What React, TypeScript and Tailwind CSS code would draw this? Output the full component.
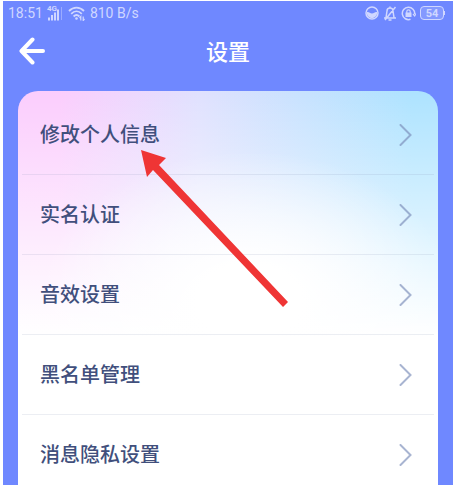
import { Fragment } from "react";

const items = ["修改个人信息", "实名认证", "音效设置", "黑名单管理", "消息隐私设置"];

function SignalIcon() {
  return (
    <svg width="17" height="18" viewBox="0 0 17 18" fill="none" aria-hidden="true">
      <text x="0" y="7" fontSize="8" fontWeight="700" fill="currentColor">
        4G
      </text>
      <path
        d="M2 13.500v3M5 11v5.500M8 8.500v8M11 5.500v11"
        stroke="currentColor"
        strokeWidth="2"
      />
      <path d="M14.500 3v13" stroke="currentColor" strokeWidth="1" opacity="0.45" />
    </svg>
  );
}

function WifiIcon() {
  return (
    <svg width="18" height="16" viewBox="0 0 18 16" fill="none" stroke="currentColor" aria-hidden="true">
      <path d="M1 6c4.400-4.500 10.600-4.500 15 0" strokeWidth="1.800" />
      <path d="M3.200 8.800c3.200-3.200 7.400-3.200 10.600 0" strokeWidth="1.800" />
      <path d="M5.600 11.500c1.900-1.900 3.900-1.900 5.800 0" strokeWidth="1.800" />
      <circle cx="8.500" cy="13.500" r="1.300" fill="currentColor" stroke="none" />
      <path d="M12.800 15.500v-4l-1.300 1.500M15.200 11.500v4l1.300-1.500" strokeWidth="1.200" />
    </svg>
  );
}

function EyeProtectionIcon() {
  return (
    <svg width="14" height="14" viewBox="0 0 14 14" fill="none" aria-hidden="true">
      <circle cx="7" cy="7" r="6" stroke="currentColor" strokeWidth="1.500" />
      <path d="M2 6c2-.5 3 1.500 5 1.500S10 5.500 12 6c.5 3.500-2 6-5 6S1.500 9.500 2 6z" fill="currentColor" />
    </svg>
  );
}

function MutedBellIcon() {
  return (
    <svg width="14" height="15" viewBox="0 0 14 15" fill="none" stroke="currentColor" strokeWidth="1.500" aria-hidden="true">
      <path d="M3 11.500 4 5a3 3 0 0 1 6 0l1 6.500M1 12h12M5.500 14h3M7 2V.5M12.500 1 2 14" />
    </svg>
  );
}

function RotationLockIcon() {
  return (
    <svg width="15" height="15" viewBox="0 0 15 15" fill="none" stroke="currentColor" aria-hidden="true">
      <path d="M9.500 13.300A6.200 6.200 0 1 1 13.700 8" strokeWidth="1.500" />
      <path d="m12 8 1.700 2L15 7.500" strokeWidth="1.200" />
      <rect x="4.500" y="6.500" width="6" height="4.500" fill="currentColor" stroke="none" />
      <path d="M5.800 7V5.500a1.700 1.700 0 0 1 3.400 0V7" strokeWidth="1.200" />
    </svg>
  );
}

function Battery({ level }: { level: number }) {
  return (
    <div className="flex items-center">
      <div className="flex h-3.5 w-6 items-center justify-center rounded-sm border border-current bg-white/15 text-[11px] leading-none font-bold">
        {level}
      </div>
      <div className="h-1 w-px bg-current" />
    </div>
  );
}

function StatusBar() {
  return (
    <div className="flex h-6 items-center justify-between pr-2 pl-[5px] text-sm text-[#d0d7ff]">
      <div className="flex items-center gap-1">
        <span>18:51</span>
        <SignalIcon />
        <WifiIcon />
        <span>810 B/s</span>
      </div>
      <div className="flex items-center gap-1">
        <EyeProtectionIcon />
        <MutedBellIcon />
        <RotationLockIcon />
        <Battery level={54} />
      </div>
    </div>
  );
}

function Header() {
  return (
    <header className="grid h-[66px] grid-cols-[1fr_auto_1fr] items-start pt-[10px] text-white">
      <button type="button" aria-label="返回" className="ml-4 flex h-8 w-7 items-center">
        <svg width="26" height="28" viewBox="0 0 26 28" fill="none" aria-hidden="true">
          <path
            d="M13.500 2.500 2.500 14l11 11.500M3 14h21"
            stroke="currentColor"
            strokeWidth="4"
            strokeLinecap="round"
            strokeLinejoin="round"
          />
        </svg>
      </button>
      <h1 className="text-[22px] leading-9 font-medium">设置</h1>
    </header>
  );
}

function SettingRow({ label }: { label: string }) {
  return (
    <button type="button" className="flex h-[79px] w-full items-center justify-between pr-[26px] pl-[22px] text-left">
      <span className="text-xl font-medium text-[#414f7c]">{label}</span>
      <svg width="13" height="22" viewBox="0 0 13 22" fill="none" className="text-[#7a8cb8]/65" aria-hidden="true">
        <path d="M1.500 1 11.500 11l-10 10" stroke="currentColor" strokeWidth="2" strokeLinecap="round" />
      </svg>
    </button>
  );
}

export default function App() {
  return (
    <div className="h-screen overflow-hidden bg-white pt-px pr-px pl-[3px] font-['Roboto','Noto_Sans_CJK_SC',sans-serif]">
      <div className="min-h-full bg-[#6f88ff]">
        <StatusBar />
        <Header />
        <main className="relative mx-[15px] rounded-t-[20px] bg-white bg-[radial-gradient(ellipse_50%_150px_at_55%_210px,#fff_0%,#fff_25%,#fff0_100%),linear-gradient(to_bottom,#fff0_0px,#fff_245px),linear-gradient(to_right,#fbcdfd_0%,#fbcdfd_10%,#e0e1fe_43%,#ade3ff_94%)] pt-[4px]">
          {items.map((label, index) => (
            <Fragment key={label}>
              {index > 0 && <hr className="mx-1 border-t border-[#8090b0]/15" />}
              <SettingRow label={label} />
            </Fragment>
          ))}
          <svg
            width="150"
            height="160"
            viewBox="0 0 150 160"
            className="pointer-events-none absolute top-[58px] left-[122px] text-[#ef3535]"
            fill="currentColor"
            aria-hidden="true"
          >
            <path d="M1 1 26 9l-7 7 129 137-5 5L13 21l-6 7z" />
          </svg>
        </main>
      </div>
    </div>
  );
}
